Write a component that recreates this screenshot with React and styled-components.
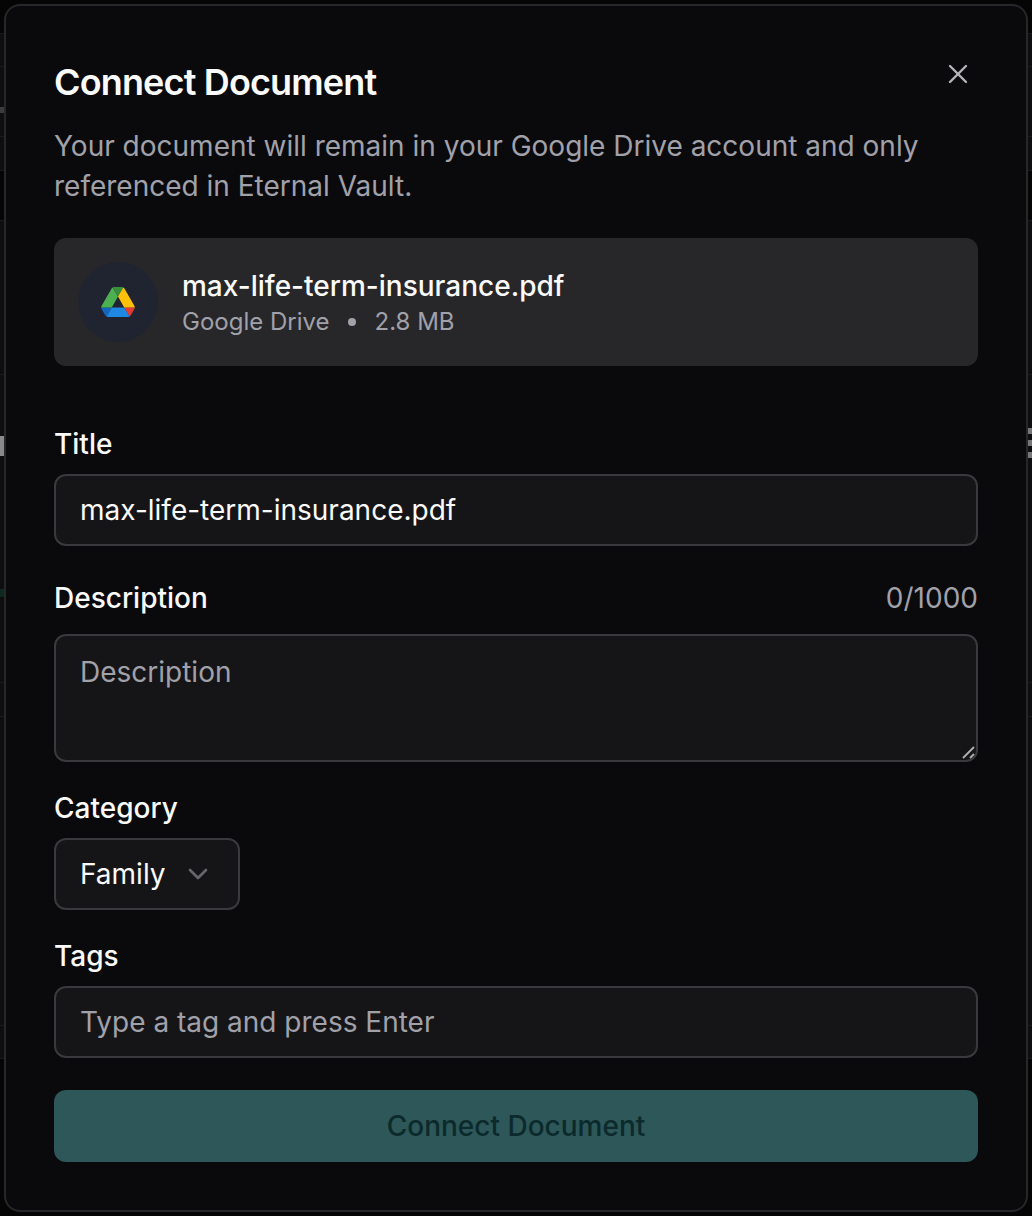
import React from "react";
import styled, { createGlobalStyle } from "styled-components";

const Global = createGlobalStyle`
  html, body { margin: 0; padding: 0; background: #070708; }
  * { box-sizing: border-box; }
  body { font-family: Inter, "Liberation Sans", sans-serif; }
`;

const Screen = styled.div`
  position: relative;
  width: 1032px;
  height: 1216px;
  padding: 4px;
  overflow: hidden;
`;

/* The dimmed page that shows in the thin strips around the dialog */
const Backdrop = styled.div`
  position: absolute;
  inset: 0;
  display: flex;
  flex-direction: column;
`;

const Band = styled.div`
  flex: none;
  background: ${p => (p.$dark ? "#050506" : "#0e0e10")};
  border-bottom: 1px solid ${p => (p.$last ? "transparent" : "#1a1a1d")};
`;

const Mark = styled.div`
  position: absolute;
  width: 4px;
  ${p => (p.$right ? "right: 0;" : "left: 0;")}
  background: ${p => p.$color};
`;

const Modal = styled.div`
  position: relative;
  height: 1208px;
  display: flex;
  flex-direction: column;
  padding: 48px;
  background: #0a0a0c;
  border: 2px solid #27272a;
  border-radius: 16px;
  color: #fafafa;
`;

const Header = styled.div`
  position: relative;
  display: flex;
  flex-direction: column;
  gap: 24px;
`;

const Title = styled.h2`
  margin: 8px 0 0;
  font-size: 36px;
  line-height: 40px;
  font-weight: 600;
  letter-spacing: -0.85px;
`;

const Desc = styled.p`
  margin: 0;
  font-size: 28px;
  line-height: 40px;
  color: #a1a1aa;
`;

const Close = styled.button`
  position: absolute;
  top: 4px;
  right: 4px;
  width: 32px;
  height: 32px;
  padding: 0;
  background: none;
  border: 0;
  color: #b4b4b8;
  display: flex;
  align-items: center;
  justify-content: center;
`;

const FileCard = styled.div`
  margin-top: 32px;
  height: 128px;
  padding: 24px;
  display: flex;
  align-items: center;
  gap: 24px;
  background: #27272a;
  border-radius: 12px;
`;

const IconCircle = styled.div`
  width: 80px;
  height: 80px;
  border-radius: 50%;
  background: #1f2430;
  display: flex;
  align-items: center;
  justify-content: center;
`;

const FileInfo = styled.div`
  display: flex;
  flex-direction: column;
`;

const FileName = styled.div`
  font-size: 28px;
  line-height: 40px;
  font-weight: 500;
`;

const FileMeta = styled.div`
  font-size: 24px;
  line-height: 32px;
  color: #a1a1aa;
  display: flex;
  align-items: center;
  gap: 18px;
`;

const Dot = styled.span`
  width: 8px;
  height: 8px;
  margin-right: 1px;
  border-radius: 50%;
  background: #a1a1aa;
`;

const Form = styled.div`
  margin-top: 58px;
  display: flex;
  flex-direction: column;
`;

const Field = styled.div`
  display: flex;
  flex-direction: column;
  gap: ${p => p.$gap ?? 10}px;
  margin-bottom: ${p => p.$mb ?? 26}px;
`;

const LabelRow = styled.div`
  display: flex;
  justify-content: space-between;
  align-items: center;
  height: 40px;
`;

const Label = styled.label`
  font-size: 28px;
  line-height: 40px;
  font-weight: 500;
`;

const Counter = styled.span`
  font-size: 28px;
  line-height: 40px;
  color: #a1a1aa;
`;

const Input = styled.input`
  width: 100%;
  height: 72px;
  padding: 0 24px;
  font: 400 28px/40px Inter, "Liberation Sans", sans-serif;
  color: #fafafa;
  background: #151517;
  border: 2px solid #3a3a3e;
  border-radius: 12px;
  outline: none;
  &::placeholder { color: #a1a1aa; opacity: 1; }
`;

const TextareaWrap = styled.div`
  position: relative;
  height: 128px;
`;

const Textarea = styled.textarea`
  display: block;
  width: 100%;
  height: 128px;
  padding: 16px 24px;
  font: 400 28px/40px Inter, "Liberation Sans", sans-serif;
  color: #fafafa;
  background: #151517;
  border: 2px solid #3a3a3e;
  border-radius: 12px;
  outline: none;
  resize: none;
  &::placeholder { color: #a1a1aa; opacity: 1; }
`;

const Grip = styled.svg`
  position: absolute;
  right: 2px;
  bottom: 2px;
  width: 16px;
  height: 16px;
`;

const Select = styled.button`
  align-self: flex-start;
  height: 72px;
  width: 186px;
  padding: 0 24px;
  display: flex;
  align-items: center;
  justify-content: space-between;
  font: 400 28px/40px Inter, "Liberation Sans", sans-serif;
  color: #fafafa;
  background: #151517;
  border: 2px solid #3a3a3e;
  border-radius: 12px;
`;

const Submit = styled.button`
  height: 72px;
  width: 100%;
  font: 500 28px/40px Inter, "Liberation Sans", sans-serif;
  color: #0c2a2b;
  background: #2d5759;
  border: 0;
  border-radius: 12px;
`;

const DriveIcon = () => (
  <svg width="34" height="30" viewBox="0 0 87.3 78" aria-hidden="true">
    <path d="m6.6 66.85 3.85 6.65c.8 1.4 1.95 2.5 3.3 3.3l13.75-23.8h-27.5c0 1.55.4 3.1 1.2 4.5z" fill="#1565c0" />
    <path d="m43.65 25-13.75-23.8c-1.35.8-2.5 1.9-3.3 3.3l-25.4 44a9.06 9.06 0 0 0 -1.2 4.5h27.5z" fill="#4caf50" />
    <path d="m73.55 76.8c1.35-.8 2.5-1.9 3.3-3.3l1.6-2.75 7.65-13.25c.8-1.4 1.2-2.95 1.2-4.5h-27.502l5.852 11.5z" fill="#e53935" />
    <path d="m43.65 25 13.75-23.8c-1.35-.8-2.9-1.2-4.5-1.2h-18.5c-1.6 0-3.15.45-4.5 1.2z" fill="#388e3c" />
    <path d="m59.8 53h-32.3l-13.75 23.8c1.35.8 2.9 1.2 4.5 1.2h50.8c1.6 0 3.15-.45 4.5-1.2z" fill="#1e88e5" />
    <path d="m73.4 26.5-12.7-22c-.8-1.4-1.95-2.5-3.3-3.3l-13.75 23.8 16.15 28h27.45c0-1.55-.4-3.1-1.2-4.5z" fill="#ffc107" />
  </svg>
);

const bands = [
  { h: 34, dark: true },
  { h: 33 },
  { h: 70 },
  { h: 34 },
  { h: 50, dark: true },
  { h: 154 },
  { h: 308 },
  { h: 34 },
  { h: 309 },
  { h: 33 },
  { h: 157, dark: true, last: true },
];

const marks = [
  { top: 107, h: 6, color: "#3c3c3f" },
  { top: 436, h: 20, color: "#8a8a8c" },
  { top: 589, h: 8, color: "#0d2a1d" },
  { top: 428, h: 6, color: "#77777a", right: true },
  { top: 440, h: 6, color: "#77777a", right: true },
  { top: 452, h: 6, color: "#77777a", right: true },
];

export default function App() {
  return (
    <>
      <Global />
      <Screen>
        <Backdrop>
          {bands.map((b, i) => (
            <Band key={i} $dark={b.dark} $last={b.last} style={{ height: b.h }} />
          ))}
          {marks.map((m, i) => (
            <Mark key={i} $right={m.right} $color={m.color} style={{ top: m.top, height: m.h }} />
          ))}
        </Backdrop>
        <Modal>
          <Header>
            <Title>Connect Document</Title>
            <Desc>Your document will remain in your Google Drive account and only referenced in Eternal Vault.</Desc>
            <Close aria-label="Close">
              <svg width="32" height="32" viewBox="0 0 24 24" fill="none" stroke="currentColor" strokeWidth="1.8" strokeLinecap="round" strokeLinejoin="round">
                <path d="M18 6 6 18" /><path d="m6 6 12 12" />
              </svg>
            </Close>
          </Header>
          <FileCard>
            <IconCircle><DriveIcon /></IconCircle>
            <FileInfo>
              <FileName>max-life-term-insurance.pdf</FileName>
              <FileMeta>Google Drive<Dot />2.8 MB</FileMeta>
            </FileInfo>
          </FileCard>
          <Form>
            <Field $mb={32}>
              <LabelRow><Label>Title</Label></LabelRow>
              <Input defaultValue="max-life-term-insurance.pdf" />
            </Field>
            <Field $gap={16}>
              <LabelRow><Label>Description</Label><Counter>0/1000</Counter></LabelRow>
              <TextareaWrap>
                <Textarea placeholder="Description" />
                <Grip viewBox="0 0 16 16" fill="none" stroke="#b0b0b0" strokeWidth="1.8">
                  <path d="M3 14 14 3" /><path d="M10 14 14 10" />
                </Grip>
              </TextareaWrap>
            </Field>
            <Field>
              <LabelRow><Label>Category</Label></LabelRow>
              <Select>
                Family
                <svg width="32" height="32" viewBox="0 0 24 24" fill="none" stroke="#66666c" strokeWidth="2" strokeLinecap="round" strokeLinejoin="round"><path d="m6 9 6 6 6-6" /></svg>
              </Select>
            </Field>
            <Field $mb={32}>
              <LabelRow><Label>Tags</Label></LabelRow>
              <Input placeholder="Type a tag and press Enter" />
            </Field>
            <Submit>Connect Document</Submit>
          </Form>
        </Modal>
      </Screen>
    </>
  );
}
